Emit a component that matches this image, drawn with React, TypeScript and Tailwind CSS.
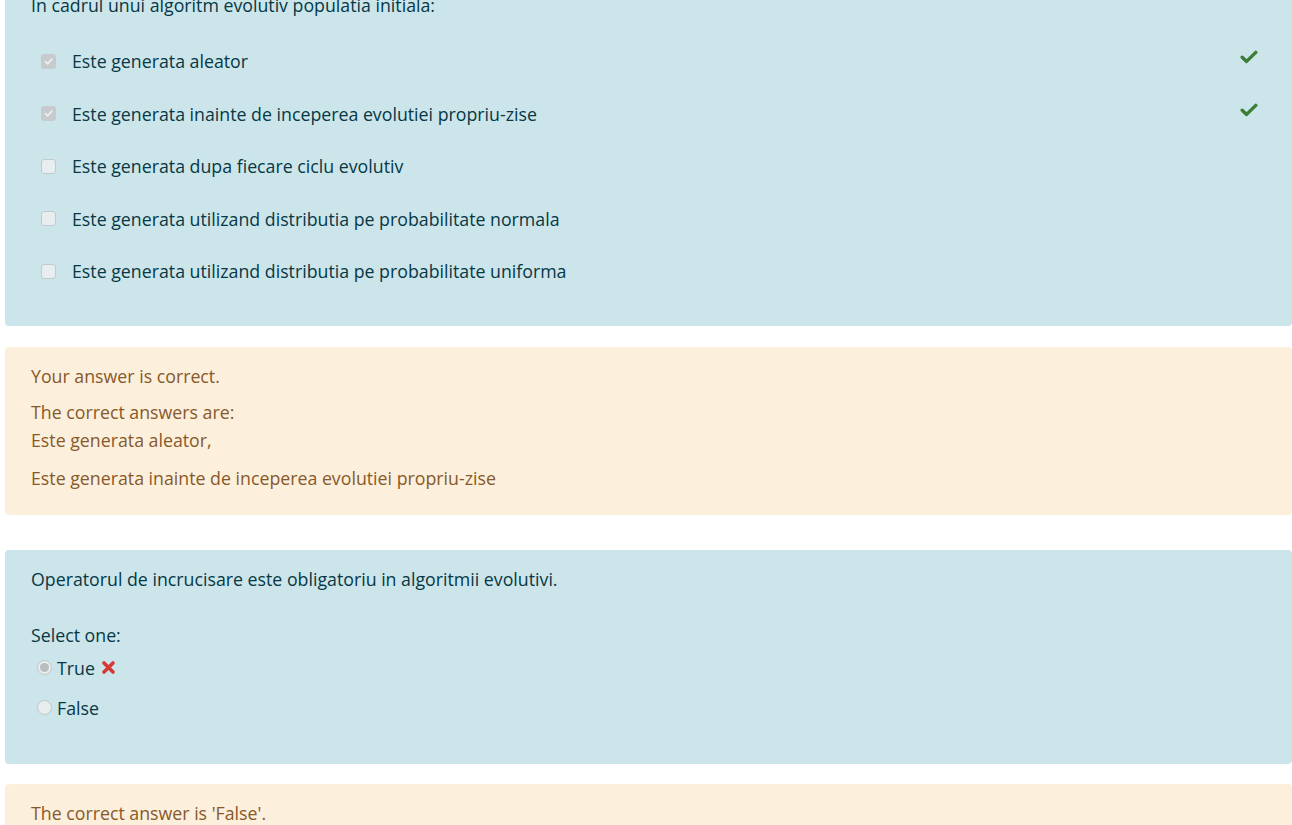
import React from 'react';

const options = [
  { id: 1, text: 'Este generata aleator', checked: true, correct: true },
  { id: 2, text: 'Este generata inainte de inceperea evolutiei propriu-zise', checked: true, correct: true },
  { id: 3, text: 'Este generata dupa fiecare ciclu evolutiv', checked: false, correct: false },
  { id: 4, text: 'Este generata utilizand distributia pe probabilitate normala', checked: false, correct: false },
  { id: 5, text: 'Este generata utilizand distributia pe probabilitate uniforma', checked: false, correct: false },
];

const Checkbox: React.FC<{ checked: boolean }> = ({ checked }) =>
  checked ? (
    <span className="flex h-[15px] w-[15px] items-center justify-center rounded-[3px] bg-[#c7cbce]">
      <svg width="11" height="11" viewBox="0 0 12 12" fill="none">
        <path d="M2.5 6.2 L5 8.6 L9.6 3.4" stroke="#eef0f1" strokeWidth="1.8" strokeLinecap="round" strokeLinejoin="round" />
      </svg>
    </span>
  ) : (
    <span className="h-[15px] w-[15px] rounded-[3px] border border-[#c3cacd] bg-[#e8edef]" />
  );

const Radio: React.FC<{ checked: boolean }> = ({ checked }) => (
  <span className="flex h-[15px] w-[15px] items-center justify-center rounded-full border border-[#bfc6c9] bg-[#e8edef]">
    {checked && <span className="h-[9px] w-[9px] rounded-full bg-[#b9bec1]" />}
  </span>
);

const CheckMark: React.FC = () => (
  <svg width="18" height="14" viewBox="0 0 18 14" className="mr-[8px] -mt-[8px]">
    <path d="M2.2 7.2 L6.6 11.4 L15.8 2.4" stroke="#3b7d35" strokeWidth="3.4" fill="none" strokeLinecap="round" strokeLinejoin="round" />
  </svg>
);

const Cross: React.FC = () => (
  <svg width="15" height="15" viewBox="0 0 15 15" className="ml-[6px]">
    <path d="M3 3 L12 12 M12 3 L3 12" stroke="#d43a33" strokeWidth="3.6" fill="none" strokeLinecap="round" />
  </svg>
);

const App: React.FC = () => {
  return (
    <div className="min-h-screen bg-white pl-[5px] font-['Open_Sans',sans-serif] text-[17.75px] leading-[28px]">
      <div className="-mt-[35px] overflow-hidden">
        <div className="rounded-[4px] bg-[#cce5ea] px-[26px] pt-[26px] pb-[28px] text-[#063845]">
          <p>In cadrul unui algoritm evolutiv populatia initiala:</p>
          <div className="mt-[16px]">
            {options.map((o) => (
              <div key={o.id} className="flex h-[52.5px] items-center pl-[10px]">
                <Checkbox checked={o.checked} />
                <span className="ml-[16px] flex-1">{o.text}</span>
                {o.correct && <CheckMark />}
              </div>
            ))}
          </div>
        </div>
      </div>

      <div className="mt-[21px] rounded-[4px] bg-[#fcefdc] px-[26px] pt-[15px] pb-[23px] text-[#87592a]">
        <p>Your answer is correct.</p>
        <p className="mt-[8px]">
          The correct answers are:
          <br />
          Este generata aleator,
        </p>
        <p className="mt-[10px]">Este generata inainte de inceperea evolutiei propriu-zise</p>
      </div>

      <div className="mt-[35px] rounded-[4px] bg-[#cce5ea] px-[26px] pt-[15px] pb-[42px] text-[#063845]">
        <p>Operatorul de incrucisare este obligatoriu in algoritmii evolutivi.</p>
        <p className="mt-[28px]">Select one:</p>
        <div className="mt-[5px] flex items-center pl-[6px]">
          <Radio checked />
          <span className="ml-[5px]">True</span>
          <Cross />
        </div>
        <div className="mt-[12px] flex items-center pl-[6px]">
          <Radio checked={false} />
          <span className="ml-[5px]">False</span>
        </div>
      </div>

      <div className="mt-[20px] rounded-[4px] bg-[#fcefdc] px-[26px] pt-[15px] pb-[23px] text-[#87592a]">
        <p>The correct answer is 'False'.</p>
      </div>
    </div>
  );
};

export default App;
